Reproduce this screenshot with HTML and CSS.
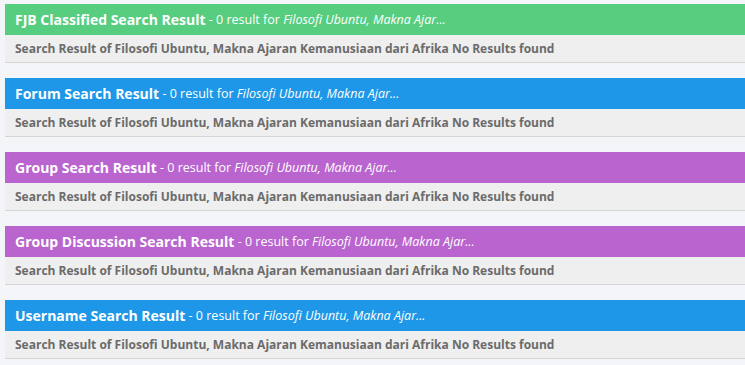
FILE: index.html
```html
<!DOCTYPE html>
<html>
<head>
<meta charset="utf-8">
<link rel="stylesheet" href="styles.css">
</head>
<body>
<div class="results">
  <section class="block">
    <div class="head green"><span class="title">FJB Classified Search Result</span> - 0 result for <em>Filosofi Ubuntu, Makna Ajar...</em></div>
    <div class="body">Search Result of Filosofi Ubuntu, Makna Ajaran Kemanusiaan dari Afrika No Results found</div>
  </section>
  <section class="block">
    <div class="head blue"><span class="title">Forum Search Result</span> - 0 result for <em>Filosofi Ubuntu, Makna Ajar...</em></div>
    <div class="body">Search Result of Filosofi Ubuntu, Makna Ajaran Kemanusiaan dari Afrika No Results found</div>
  </section>
  <section class="block">
    <div class="head purple"><span class="title">Group Search Result</span> - 0 result for <em>Filosofi Ubuntu, Makna Ajar...</em></div>
    <div class="body">Search Result of Filosofi Ubuntu, Makna Ajaran Kemanusiaan dari Afrika No Results found</div>
  </section>
  <section class="block">
    <div class="head purple"><span class="title">Group Discussion Search Result</span> - 0 result for <em>Filosofi Ubuntu, Makna Ajar...</em></div>
    <div class="body">Search Result of Filosofi Ubuntu, Makna Ajaran Kemanusiaan dari Afrika No Results found</div>
  </section>
  <section class="block">
    <div class="head blue"><span class="title">Username Search Result</span> - 0 result for <em>Filosofi Ubuntu, Makna Ajar...</em></div>
    <div class="body">Search Result of Filosofi Ubuntu, Makna Ajaran Kemanusiaan dari Afrika No Results found</div>
  </section>
</div>
</body>
</html>
```

FILE: styles.css
```css
html, body {
  margin: 0;
  padding: 0;
  background: #f4f5f8;
  font-family: "Open Sans", "Liberation Sans", sans-serif;
}
.results {
  display: flex;
  flex-direction: column;
  gap: 15px;
  padding: 4px 0 0 5px;
}
.head {
  height: 31px;
  box-sizing: border-box;
  padding: 0 10px;
  display: flex;
  align-items: center;
  white-space: pre;
  color: #fff;
  font-size: 12.5px;
}
.head .title {
  font-weight: 700;
  font-size: 14px;
}
.head em {
  font-style: italic;
}
.green { background: #56cd7f; }
.blue { background: #1e97e8; }
.purple { background: #b964cf; }
.body {
  height: 28px;
  box-sizing: border-box;
  padding: 0 10px;
  display: flex;
  align-items: center;
  background: #efefef;
  border-bottom: 1px solid #d5d5d5;
  color: #6b6b6b;
  font-size: 12px;
  font-weight: 700;
}
```
